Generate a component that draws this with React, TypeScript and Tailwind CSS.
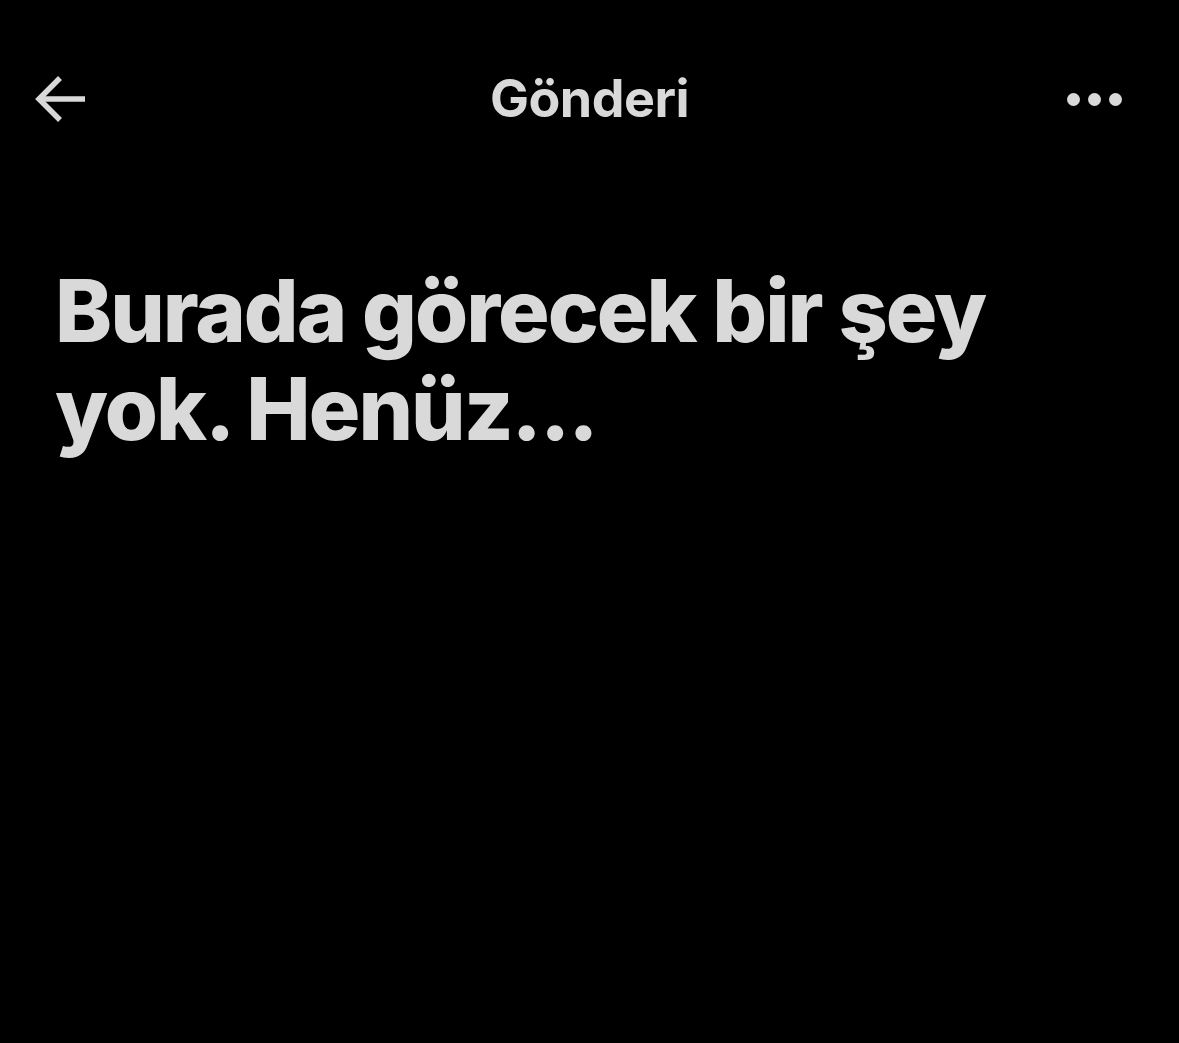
import React from 'react'

const BackArrow: React.FC = () => (
  <svg width="52" height="48" viewBox="0 0 52 48" fill="none" stroke="#d9d9d9" strokeWidth="5.5" strokeLinecap="butt">
    <path d="M50 24H6" />
    <path d="M25 3L4 24l21 21" />
  </svg>
)

const MoreDots: React.FC = () => (
  <div className="flex items-center gap-[8px] mr-[22px]">
    <span className="block w-[13px] h-[13px] rounded-full bg-[#d9d9d9]" />
    <span className="block w-[13px] h-[13px] rounded-full bg-[#d9d9d9]" />
    <span className="block w-[13px] h-[13px] rounded-full bg-[#d9d9d9]" />
  </div>
)

const App: React.FC = () => {
  return (
    <div className="w-[1179px] h-[1043px] bg-black text-[#d9d9d9] font-['Inter',sans-serif] overflow-hidden">
      <header className="h-[198px] grid grid-cols-[1fr_auto_1fr] items-center px-[35px]">
        <div className="flex items-center">
          <BackArrow />
        </div>
        <h1 className="text-[52px] font-bold tracking-[-0.5px]">Gönderi</h1>
        <div className="flex justify-end">
          <MoreDots />
        </div>
      </header>
      <main className="px-[55px] pt-[64px]">
        <h2 className="text-[86px] leading-[98px] font-extrabold tracking-[-2px] max-w-[1000px]">
          {'Burada görecek bir şey yok. Henüz.\u200C.\u200C.'}
        </h2>
      </main>
    </div>
  )
}

export default App
